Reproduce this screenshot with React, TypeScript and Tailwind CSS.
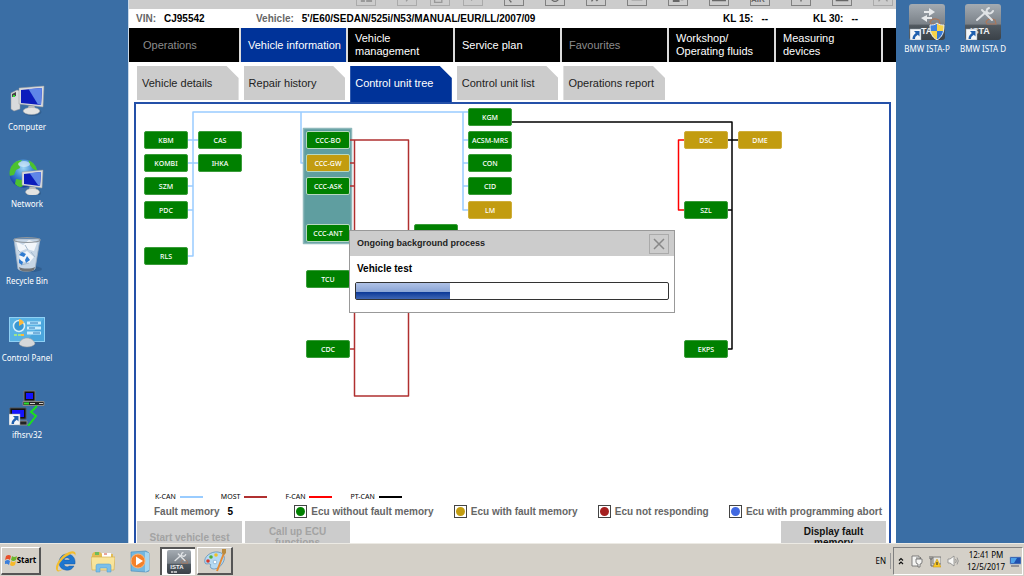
import { useState, type ReactNode } from "react";
import clsx from "clsx";

type Status = "ok" | "fault";

interface Ecu {
  name: string;
  x: number;
  y: number;
  status?: Status;
  grouped?: boolean;
}

// node positions on the control unit canvas
const ECUS: Ecu[] = [
  { name: "KBM", x: 8, y: 27 },
  { name: "KOMBI", x: 8, y: 50 },
  { name: "SZM", x: 8, y: 73 },
  { name: "PDC", x: 8, y: 97 },
  { name: "RLS", x: 8, y: 143 },
  { name: "CAS", x: 62, y: 27 },
  { name: "IHKA", x: 62, y: 50 },
  { name: "CCC-BO", x: 170, y: 27, grouped: true },
  { name: "CCC-GW", x: 170, y: 50, status: "fault", grouped: true },
  { name: "CCC-ASK", x: 170, y: 73, grouped: true },
  { name: "CCC-ANT", x: 170, y: 120, grouped: true },
  { name: "TCU", x: 170, y: 166 },
  { name: "CDC", x: 170, y: 236 },
  { name: "", x: 278, y: 120 },
  { name: "KGM", x: 332, y: 4 },
  { name: "ACSM-MRS", x: 332, y: 27 },
  { name: "CON", x: 332, y: 50 },
  { name: "CID", x: 332, y: 73 },
  { name: "LM", x: 332, y: 97, status: "fault" },
  { name: "DSC", x: 548, y: 27, status: "fault" },
  { name: "DME", x: 602, y: 27, status: "fault" },
  { name: "SZL", x: 548, y: 97 },
  { name: "EKPS", x: 548, y: 236 },
];

const BUSES = [
  { name: "K-CAN", color: "#99ccff" },
  { name: "MOST", color: "#b03030" },
  { name: "F-CAN", color: "#ff0000" },
  { name: "PT-CAN", color: "#000000" },
];

const LEGEND = [
  { label: "Ecu without fault memory", color: "#008000" },
  { label: "Ecu with fault memory", color: "#c29c10" },
  { label: "Ecu not responding", color: "#a52020" },
  { label: "Ecu with programming abort", color: "#4169e1" },
];

const NAV = [
  { label: "Operations", disabled: true },
  { label: "Vehicle information", active: true },
  { label: "Vehicle\nmanagement" },
  { label: "Service plan" },
  { label: "Favourites", disabled: true },
  { label: "Workshop/\nOperating fluids" },
  { label: "Measuring\ndevices" },
];

const TABS = ["Vehicle details", "Repair history", "Control unit tree", "Control unit list", "Operations report"];

function Monitor({ x, y, w, h }: { x: number; y: number; w: number; h: number }) {
  return (
    <g>
      <ellipse cx={x + w / 2 + 1} cy={y + h + 5} rx={w / 2.8} ry="4" fill="#27507c" opacity=".5" />
      <path d={`M${x + w / 2 - 3} ${y + h - 1}h6l1 5h-8z`} fill="#b9bcbf" />
      <ellipse cx={x + w / 2} cy={y + h + 4} rx={w / 3} ry="3.500" fill="#e4e4e2" stroke="#aaa" strokeWidth=".5" />
      <path d={`M${x} ${y + 2}l${w} -2l-1 ${h}l${1 - w} -3z`} fill="#d9dcdf" stroke="#999" strokeWidth=".5" />
      <path d={`M${x + 2} ${y + 4}l${w - 4} -2l-1 ${h - 4}l${5 - w} -2z`} fill="#0c1cbc" />
      <path d={`M${x + w / 2 - 3} ${y + 3}l${w / 2 + 1} -1l-1 ${h - 4}l${5 - w / 3} -1z`} fill="#5f86e8" />
    </g>
  );
}

function ComputerIcon() {
  return (
    <svg viewBox="0 0 36 36" className="size-9">
      <path d="M2 11l6-3 3 1v18l-6 2-3-2z" fill="#d8dadc" stroke="#999" strokeWidth=".5" />
      <path d="M3 12l4-2v4l-4 1z" fill="#444" />
      <rect x="4" y="13" width="2" height="2" fill="#3d3" />
      <Monitor x={10} y={4} w={25} h={21} />
    </svg>
  );
}

function NetworkIcon() {
  return (
    <svg viewBox="0 0 36 36" className="size-9">
      <defs>
        <radialGradient id="globe" cx=".5" cy=".3" r=".7">
          <stop offset="0" stopColor="#9fd6f4" />
          <stop offset=".5" stopColor="#3b86d4" />
          <stop offset="1" stopColor="#15379c" />
        </radialGradient>
        <clipPath id="globe-clip">
          <circle cx="14.500" cy="14.500" r="14" />
        </clipPath>
      </defs>
      <circle cx="14.500" cy="14.500" r="14" fill="url(#globe)" />
      <g clipPath="url(#globe-clip)" fill="#4cc22e">
        <path d="M0 8L6 2l7-1-3 4 1 4-4 2-2 5-5 1z" />
        <path d="M19 0l7 4 3 8-5-2-3-4z" />
        <path d="M7 20l6 1 1 6-4 2-4-4z" />
      </g>
      <ellipse cx="15" cy="5" rx="6" ry="3" fill="#e4f5fd" opacity=".6" />
      <Monitor x={13} y={11} w={21} h={18} />
    </svg>
  );
}

function BinIcon() {
  return (
    <svg viewBox="0 0 36 36" className="size-9">
      <ellipse cx="22" cy="33" rx="11" ry="3" fill="#27507c" opacity=".5" />
      <path d="M5 3l4 30c3 3 14 3 17 0l5-30z" fill="#c6d6e6" stroke="#a5b3c2" strokeWidth=".8" />
      <path d="M7 5l7 4 6-5 8 3-3 8-8-2-7 3zM10 20l8-5 7 6-5 6-8-2z" fill="#f2f6fa" />
      <path d="M9 14l4 4M22 16l4 5M12 29l8-2M16 9l3 5" stroke="#a3b8cc" />
      <ellipse cx="18" cy="4" rx="13" ry="2.500" fill="none" stroke="#8f969c" strokeWidth="1.200" />
      <path d="M10 19l3-3 4 2-2 3zM18 20l3 4-4 3-1-3zM10 23l4 3-1 3-3-2z" fill="#2f7bd0" />
      <path d="M10 31c4 2 12 2 16 0l-1 3c-4 2-10 2-14 0z" fill="#6f7377" />
    </svg>
  );
}

function ControlPanelIcon() {
  return (
    <svg viewBox="0 0 36 36" className="size-9">
      <rect x=".5" y="4.500" width="35" height="24" fill="#4aa5dc" stroke="#8fd0f4" />
      <path d="M1 5h34L18 28H1z" fill="#63bbea" opacity=".6" />
      <circle cx="10" cy="13" r="5.500" fill="#3997d2" stroke="#d3effc" strokeWidth="1.500" />
      <path d="M10 13V6a6 6 0 0 1 5 4z" fill="#fbb93e" />
      <path d="M18 10h14M18 15h14M18 20h14" stroke="#c9ecfd" strokeWidth="3" />
      <path d="M21 10h8M20 15h6M24 20h7" stroke="#2277bb" strokeWidth="1" />
      <path d="M5 22h3M9 22h3" stroke="#9be58c" strokeWidth="2" />
      <path d="M12 22h3" stroke="#fbb93e" strokeWidth="2" />
      <path d="M10 31c2-8 14-8 16 0-3 4-13 4-16 0z" fill="#d6d8da" stroke="#999" strokeWidth=".5" />
    </svg>
  );
}

function ShortcutArrow({ x, y }: { x: number; y: number }) {
  return (
    <g transform={`translate(${x} ${y})`}>
      <rect width="11" height="11" fill="#f4f6f8" stroke="#8d9aa8" strokeWidth=".5" />
      <path d="M4 2h5.500v5.500L7.800 5.800C6 7 5 8 5 10H2.500C2.500 7 4 5.500 5.800 3.900z" fill="#1f5fae" />
    </g>
  );
}

function IfhIcon() {
  return (
    <svg viewBox="0 0 36 36" className="size-9">
      <path d="M15 1h11v10H15z" fill="#111" stroke="#777" />
      <path d="M17 3h7v6h-7z" fill="#1414ff" />
      <path d="M14 11.500h21v4H14z" fill="#222" stroke="#888" />
      <path d="M15 13.500h5" stroke="#2ee02e" strokeWidth="2" />
      <path d="M21 13.500h5M30 13.500h4" stroke="#ccc" />
      <path d="M1 18h16v11H1z" fill="#111" stroke="#555" />
      <path d="M3 20h12v7H3z" fill="#1414ff" />
      <path d="M10 31h8v4h-8z" fill="#222" stroke="#888" />
      <path d="M28 16l-6 6 5 4-8 10" stroke="#1ce01c" strokeWidth="2" fill="none" />
      <ShortcutArrow x={0} y={24} />
    </svg>
  );
}

function IstaTile({ shield, shortcut = true, className = "size-9" }: { shield?: boolean; shortcut?: boolean; className?: string }) {
  return (
    <svg viewBox="0 0 36 36" className={className}>
      <defs>
        <linearGradient id="tile" x1="0" y1="0" x2="0" y2="1">
          <stop offset="0" stopColor="#a4abb2" />
          <stop offset=".55" stopColor="#7b8289" />
          <stop offset=".6" stopColor="#50585f" />
          <stop offset="1" stopColor="#3a4148" />
        </linearGradient>
      </defs>
      <rect width="36" height="36" rx="3" fill="url(#tile)" />
      <path d="M21 18c2-4 5-4 9-2l1 4h-9z" fill="none" stroke="#a9775c" strokeWidth="1.200" />
      {shield ? (
        <path d="M20 4l6 4-6 4V9h-5V7h5zM18 11l-6 3 6 4v-3h5v-2h-5z" fill="#e8eaec" />
      ) : (
        <path d="M12 16l9-8M17 6l10 10M24 4c-3 1-3 4-1 5s4 0 5-2" stroke="#e0e3e6" strokeWidth="2" fill="none" strokeLinecap="round" />
      )}
      <text x={shield ? 12 : 5} y={shortcut ? 30 : 29} fontSize="9" fontWeight="bold" fill="#f0f2f4" fontFamily="Liberation Sans, sans-serif">
        {shield ? "TA" : "ISTA"}
      </text>
      {!shortcut && <path d="M6 33h3m1 0h5" stroke="#ddd" strokeWidth="2" />}
      {shortcut && <ShortcutArrow x={1} y={25} />}
      {shield && (
        <g>
          <path d="M28 19v8h-7c0-2 0-4 0-6 3 0 5 0 7-2z" fill="#3f80dc" />
          <path d="M28 19c2 2 4 2 7 2v6h-7z" fill="#f7d34a" />
          <path d="M28 27h-7c1 4 3 7 7 9z" fill="#f7d34a" />
          <path d="M28 27h7c-1 4-3 7-7 9z" fill="#3578d4" />
          <path d="M28 19c2 2 5 2 7 2 0 8-2 12-7 15-5-3-7-7-7-15 2 0 5 0 7-2z" fill="none" stroke="#e7edf5" />
        </g>
      )}
    </svg>
  );
}

function DesktopIcon({ label, children }: { label: string; children: ReactNode }) {
  return (
    <button className="flex w-[54px] shrink-0 flex-col items-center gap-[3px] text-[8px] leading-[11px] whitespace-nowrap text-white">
      {children}
      <span>{label}</span>
    </button>
  );
}

// glyphs of the window's tool row, only their lower part is on screen
const TOOL_GLYPHS = [
  { d: "M5 8h3v8H5zM11 10h5v6h-5z", filled: true, dim: true },
  { d: "M9 16l2-3", dim: true, wide: true },
  { d: "M4 9h8v8H4zM8 6h8v8", dim: true },
  { d: "M8 15l3-4", dim: true },
  { d: "M5 15l5-4M4 13l3 4", wide: true },
  { d: "M6 12a4 4 0 1 0 8 0h-4", wide: true },
  { d: "M5 16l3-4 3 3 4-4", wide: true },
  { d: "M4 14h12", wide: true },
  { d: "M5 9h6v7H5zM13 14h3", filled: true, wide: true },
  { d: "M3 12h14v3H3z", filled: true, wide: true },
  { text: "AIR", wide: true },
  { d: "M10 5v6M10 14v2", wide: true },
  { d: "M3 15h14M10 8v7", wide: true },
  { d: "M5 16l4-5M15 16l-4-5", dim: true, wide: true },
];

function ToolRow() {
  return (
    <div className="flex h-[9px] items-end justify-end overflow-hidden bg-[#cccccc] pr-[3px] pb-[3px]">
      {TOOL_GLYPHS.map((t, i) => (
        <button
          key={i}
          aria-label={`Tool ${i + 1}`}
          className={clsx("size-5 shrink-0 border", t.wide ? "ml-[21px]" : "ml-[13px]", t.dim ? "border-[#aaaaaa] text-[#999999]" : "border-[#808080] text-[#666666]")}
        >
          <svg viewBox="0 0 20 20" className="size-[18px]">
            {t.d && <path d={t.d} fill={t.filled ? "currentColor" : "none"} stroke="currentColor" strokeWidth="1.500" />}
            {t.text && (
              <text x="0" y="17" fontSize="9" fontWeight="bold" fill="currentColor" fontFamily="Liberation Sans, sans-serif">
                {t.text}
              </text>
            )}
          </svg>
        </button>
      ))}
    </div>
  );
}

function InfoBar() {
  return (
    <div className="flex h-[19px] items-center pl-[7px] text-[10px] leading-none font-bold whitespace-nowrap text-black">
      <p className="flex w-[120px] gap-2">
        <span className="text-[#666666]">VIN:</span>CJ95542
      </p>
      <p className="flex flex-1 gap-2">
        <span className="text-[#666666]">Vehicle:</span>5'/E60/SEDAN/525i/N53/MANUAL/EUR/LL/2007/09
      </p>
      <p className="flex w-[90px] gap-2">
        <span>KL 15:</span>--
      </p>
      <p className="flex w-[83px] gap-2">
        <span>KL 30:</span>--
      </p>
    </div>
  );
}

function MainNav() {
  return (
    <nav className="grid h-[34px] grid-cols-[112fr_repeat(6,107fr)_13fr] text-[11px] leading-[13px]">
      {NAV.map((item, i) => (
        <button
          key={item.label}
          disabled={item.disabled}
          className={clsx(
            "border-r-2 border-[#dddddd] text-left whitespace-pre",
            i === 0 ? "pl-[14px]" : "pl-[7px]",
            item.active ? "bg-[#003399]" : "bg-black",
            item.disabled ? "text-[#8c8c8c]" : "text-white",
          )}
        >
          {item.label}
        </button>
      ))}
      <span className="bg-black" />
    </nav>
  );
}

function Tabs({ active, onSelect }: { active: string; onSelect: (tab: string) => void }) {
  return (
    <div role="tablist" className="mt-1 ml-2 grid h-9 w-[528px] max-w-full grid-cols-5 items-start gap-[5px] text-[11px]">
      {TABS.map((tab) => (
        <button
          key={tab}
          role="tab"
          aria-selected={tab === active}
          onClick={() => onSelect(tab)}
          className={clsx(
            "pl-[5px] text-left whitespace-nowrap [clip-path:polygon(0_0,calc(100%_-_12px)_0,100%_12px,100%_100%,0_100%)]",
            tab === active ? "h-9 bg-[#003399] pb-0.5 text-white" : "h-[34px] bg-[#cccccc] text-[#222222]",
          )}
        >
          {tab}
        </button>
      ))}
    </div>
  );
}

function BusLines() {
  return (
    <svg viewBox="0 0 752 380" className="h-[380px] w-[752px]" fill="none" strokeWidth="1.500" strokeLinejoin="round">
      <path
        stroke="#99ccff"
        d="M332 8H57V152H51M51 36H62M51 59H62M51 82H57M51 106H57M165 8V59H170M327 8V106H332M327 36H332M327 59H332M327 82H332"
      />
      <rect x="167.500" y="24.500" width="48" height="115" fill="#5f9ea0" stroke="#8fb9bb" />
      <path stroke="#b03030" d="M214 36H272.500V292H218.500V36M214 59H218M214 82H218M214 245H218" />
      <path stroke="#000" d="M375 18H596V245H591M591 36H602M591 106H596" />
      <path stroke="#f00" d="M548 36H542.500V106H548" />
    </svg>
  );
}

function EcuNode({ ecu }: { ecu: Ecu }) {
  return (
    <button
      className={clsx(
        "absolute flex h-[18px] w-11 items-center justify-center rounded-[2px] border font-['Noto_Sans',sans-serif] text-[7px] leading-none font-medium text-white",
        ecu.status === "fault" ? "bg-[#c29c10]" : "bg-[#008000]",
        ecu.grouped ? "border-[#b7d8c0]" : ecu.status === "fault" ? "border-[#cfae3a]" : "border-[#3a9c3a]",
      )}
      style={{ left: ecu.x, top: ecu.y }}
    >
      {ecu.name}
    </button>
  );
}

function ProcessDialog({ progress }: { progress: number }) {
  return (
    <div role="dialog" aria-label="Ongoing background process" className="absolute top-[126px] left-[213px] w-[326px] border border-[#999999] bg-white text-black">
      <div className="flex h-[25px] items-center justify-between bg-[#cccccc] pr-[5px] pl-[7px]">
        <h2 className="text-[9px] font-bold text-[#222222]">Ongoing background process</h2>
        <button aria-label="Close" className="size-5 border border-[#aaaaaa] p-[3px] text-[#888888]">
          <svg viewBox="0 0 12 12" className="size-3" stroke="currentColor" strokeWidth="1.500">
            <path d="M1 1l10 10M11 1L1 11" />
          </svg>
        </button>
      </div>
      <div className="px-[5px] pt-[5px] pb-3">
        <p className="pl-0.5 text-[10px] leading-4 font-bold">Vehicle test</p>
        <div role="progressbar" aria-valuenow={progress} className="mt-[5px] h-[18px] rounded-[2px] border border-[#333333] bg-white">
          <div
            className="h-full bg-[linear-gradient(to_bottom,#b0c2e6_0%,#8ba5d6_54%,#0a3796_56%,#3f66b5_100%)]"
            style={{ width: `${progress}%` }}
          />
        </div>
      </div>
    </div>
  );
}

function Legend() {
  return (
    <>
      <ul className="flex gap-[18px] pl-[19px] font-['Noto_Sans',sans-serif] text-[7px] leading-[11px] text-black">
        {BUSES.map((bus) => (
          <li key={bus.name} className="flex items-center gap-1">
            {bus.name}
            <span className="h-0.5 w-[23px]" style={{ backgroundColor: bus.color }} />
          </li>
        ))}
      </ul>
      <div className="flex h-[19px] items-center justify-between pr-[7px] pl-[18px] text-[10px] font-bold whitespace-nowrap text-[#666666]">
        <p className="flex w-[120px] gap-2">
          Fault memory <span className="text-black">5</span>
        </p>
        {LEGEND.map((item) => (
          <p key={item.label} className="flex items-center gap-1">
            <span className="flex size-[13px] items-center justify-center border border-[#444444]">
              <span className="size-[9px] rounded-full" style={{ backgroundColor: item.color }} />
            </span>
            {item.label}
          </p>
        ))}
      </div>
    </>
  );
}

function ActionButton({ label, disabled }: { label: string; disabled?: boolean }) {
  return (
    <button
      disabled={disabled}
      className={clsx("h-8 w-[105px] bg-[#cccccc] px-3 text-[10px] leading-[11px] font-bold", disabled ? "text-[#a3a3a3]" : "text-[#111111]")}
    >
      {label}
    </button>
  );
}

function IstaWindow() {
  const [tab, setTab] = useState("Control unit tree");

  return (
    <main className="min-w-0 flex-1 overflow-hidden border-l border-[#c9d8e8] bg-white">
      <ToolRow />
      <InfoBar />
      <MainNav />
      <Tabs active={tab} onSelect={setTab} />
      <section className="mr-[5px] ml-[5px] border-2 border-[#2450a8] pb-2">
        <div className="relative h-[387px]">
          <BusLines />
          {ECUS.map((ecu) => (
            <EcuNode key={`${ecu.x}-${ecu.y}`} ecu={ecu} />
          ))}
          <ProcessDialog progress={30} />
        </div>
        <Legend />
        <div className="flex gap-[3px] pr-[3px] pl-[1px]">
          <ActionButton label="Start vehicle test" disabled />
          <ActionButton label="Call up ECU functions" disabled />
          <span className="flex-1" />
          <ActionButton label="Display fault memory" />
        </div>
      </section>
    </main>
  );
}

function StartFlag() {
  return (
    <svg viewBox="0 0 12 12" className="size-3">
      <path d="M1 2q3-2 5 0L5 6Q3 4 0 6z" fill="#e8502a" />
      <path d="M7 2q2 2 5 0l-1 4q-3 2-5 0z" fill="#6cb52d" />
      <path d="M0 7q3-2 5 0l-1 4q-2-2-4-1z" fill="#3a7edb" />
      <path d="M6 7q2 2 5 0l-1 4q-3 2-5 0z" fill="#f7b92a" />
    </svg>
  );
}

function IeIcon() {
  return (
    <svg viewBox="0 0 24 24" className="size-6">
      <path d="M5 14a8 8 0 0 0 15 3h-5c-2 2-5 0-5-2h11c1-6-3-10-8-10s-8 4-8 9zm5-3c1-3 5-3 6 0z" fill="#1e76cf" stroke="#0c4c98" strokeWidth=".4" />
      <path d="M3 22c-4-4 4-16 12-19 5-2 8 0 6 4 0-3-3-3-6-1C8 9 3 17 4 21c1 1 3 0 5-1-2 2-5 3-6 2z" fill="#f3bd2e" />
    </svg>
  );
}

function FolderIcon() {
  return (
    <svg viewBox="0 0 24 24" className="size-6">
      <path d="M1 5l2-2h6l2 2h11v16H1z" fill="#e3bd55" />
      <path d="M4 3h4v3H4z" fill="#6fbb58" />
      <path d="M11 4h9v4h-9z" fill="#fff" />
      <path d="M13 5h3" stroke="#d24a3a" />
      <path d="M0 8h24l-1 13H1z" fill="#f8e49b" stroke="#d1aa44" strokeWidth=".6" />
      <path d="M5 23v-6q0-2 2-2h11q2 0 2 2v6h-4v-4H9v4z" fill="#7cc0ea" stroke="#4b98cc" strokeWidth=".5" />
    </svg>
  );
}

function PlayerIcon() {
  return (
    <svg viewBox="0 0 24 24" className="size-6">
      <path d="M3 3l15-1 3 2v18l-3 1-15-1z" fill="#72b7e0" stroke="#4588b8" strokeWidth=".6" />
      <path d="M17 3l4 1v17l-4 2z" fill="#a6d6f0" />
      <circle cx="10" cy="12" r="7" fill="#f4812a" stroke="#fbb67d" />
      <path d="M8 7.500l7 4.500-7 4.500z" fill="#fff" />
    </svg>
  );
}

function PaintIcon() {
  return (
    <svg viewBox="0 0 24 24" className="size-6">
      <path d="M2 15C0 9 8 3 15 4c7 1 8 7 4 12-3 5-9 6-11 4s1-3-1-4-4 1-5-1z" fill="#b5d9f2" stroke="#5e92bd" strokeWidth=".8" />
      <circle cx="5" cy="13" r="1.800" fill="#d33a2c" />
      <circle cx="8" cy="9" r="1.800" fill="#4fae3c" />
      <circle cx="13" cy="7" r="1.800" fill="#f0c02a" />
      <circle cx="12" cy="14" r="1.800" fill="#fff" stroke="#5e92bd" strokeWidth=".5" />
      <path d="M14 23L21 5" stroke="#e58a36" strokeWidth="2" />
      <path d="M19 1h4v4l-2 2-2-2z" fill="#b98a3e" />
    </svg>
  );
}

function Tray() {
  return (
    <div className="flex h-7 items-center border border-[#808080] border-r-white border-b-white pr-px pl-[3px]">
      <button aria-label="Show hidden icons">
        <svg viewBox="0 0 8 8" className="size-2" fill="none" stroke="#111" strokeWidth="1.200">
          <path d="M2 3.500l2-2 2 2M2 7l2-2 2 2" />
        </svg>
      </button>
      <svg viewBox="0 0 12 14" className="ml-1.5 h-3.5 w-3" fill="#f4f4f2" stroke="#666" strokeWidth=".8">
        <path d="M1 2h7v10H1z" />
        <path d="M5 5h6v3q0 2-2 2v3H7v-3Q5 10 5 8zM6 5V3M9.500 5V3" />
      </svg>
      <svg viewBox="0 0 12 14" className="ml-1.5 h-3.5 w-3">
        <path d="M4 3h8v7H4z" fill="#e4e4e0" stroke="#666" strokeWidth=".8" />
        <path d="M1 2v3h2V2M2 5v7h3" fill="none" stroke="#666" />
        <path d="M8 5l4 8H4z" fill="#f9c926" stroke="#c08d10" strokeWidth=".5" />
        <path d="M8 8v3" stroke="#222" />
      </svg>
      <svg viewBox="0 0 12 14" className="ml-1.5 h-3.5 w-3" fill="#f8f8f6" stroke="#888" strokeWidth=".8">
        <path d="M1 5h2l4-3v10L3 9H1z" />
        <path d="M8.500 5q1.500 2 0 4M10 3.500q2.500 3.500 0 7" fill="none" />
      </svg>
      <time className="mr-1 ml-auto text-center text-[8px] leading-3">
        12:41 PM
        <br />
        12/5/2017
      </time>
      <svg viewBox="0 0 12 12" className="size-3">
        <path d="M1 2h11v7H1z" fill="#1f4fae" stroke="#8aa5c8" strokeWidth=".6" />
        <path d="M2 3h6L5 8H2z" fill="#4fa2e8" />
        <path d="M2 11h8" stroke="#556" />
      </svg>
    </div>
  );
}

function Taskbar() {
  return (
    <footer className="flex h-[33px] shrink-0 items-center border-t border-[#eceae4] bg-[#d4d0c8] px-px pt-px text-black">
      <button className="flex h-7 w-10 items-center justify-center border border-white border-r-2 border-r-[#555555] border-b-2 border-b-[#555555] text-[8px] font-bold">
        <StartFlag />
        Start
      </button>
      <div className="ml-[13px] flex items-center gap-[13px]">
        <button aria-label="Internet Explorer"><IeIcon /></button>
        <button aria-label="Explorer"><FolderIcon /></button>
        <button aria-label="Media Player"><PlayerIcon /></button>
      </div>
      <button aria-label="ISTA" className="ml-2 flex h-7 w-[35px] items-center justify-center border-t-2 border-l-2 border-[#555555] bg-white">
        <IstaTile shortcut={false} className="size-6" />
      </button>
      <button aria-label="Paint" className="ml-0.5 flex h-7 w-9 items-center justify-center border border-white border-r-2 border-r-[#555555] border-b-2 border-b-[#555555]">
        <PaintIcon />
      </button>
      <span className="ml-auto border-r border-[#999999] pr-1 text-[8px] leading-4">EN</span>
      <div className="ml-0.5 w-[130px]">
        <Tray />
      </div>
    </footer>
  );
}

export default function App() {
  return (
    <div className="flex h-screen flex-col overflow-hidden bg-[#3a6ea5] font-['Noto_Sans',sans-serif]">
      <div className="flex min-h-0 flex-1">
        <aside className="flex w-32 shrink-0 flex-col gap-[27px] pt-[82px]">
          <DesktopIcon label="Computer"><ComputerIcon /></DesktopIcon>
          <DesktopIcon label="Network"><NetworkIcon /></DesktopIcon>
          <DesktopIcon label="Recycle Bin"><BinIcon /></DesktopIcon>
          <DesktopIcon label="Control Panel"><ControlPanelIcon /></DesktopIcon>
          <DesktopIcon label="ifhsrv32"><IfhIcon /></DesktopIcon>
        </aside>
        <div className="flex min-w-0 flex-1 font-['Liberation_Sans',Arial,sans-serif]">
          <IstaWindow />
        </div>
        <aside className="flex w-32 shrink-0 items-start gap-0.5 pt-1 pl-1">
          <DesktopIcon label="BMW ISTA-P"><IstaTile shield /></DesktopIcon>
          <DesktopIcon label="BMW ISTA D"><IstaTile /></DesktopIcon>
        </aside>
      </div>
      <Taskbar />
    </div>
  );
}
